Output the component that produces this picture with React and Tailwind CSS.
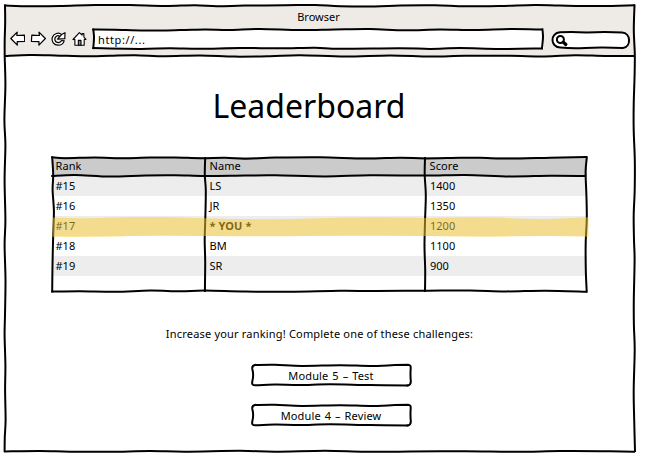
import React from "react";

// Smooth curve through a flat list of x,y pairs.
function curve(n) {
  const p = [];
  for (let i = 0; i < n.length; i += 2) p.push([n[i], n[i + 1]]);
  let d = `M${p[0][0]} ${p[0][1]}`;
  for (let i = 0; i < p.length - 1; i++) {
    const a = p[i - 1] || p[i];
    const b = p[i];
    const c = p[i + 1];
    const e = p[i + 2] || c;
    d += `C${b[0] + (c[0] - a[0]) / 6} ${b[1] + (c[1] - a[1]) / 6} ${c[0] - (e[0] - b[0]) / 6} ${c[1] - (e[1] - b[1]) / 6} ${c[0]} ${c[1]}`;
  }
  return d;
}

// Hand-drawn outline laid over a box; lines share the page's coordinates.
function Sketch({ box, lines = [], paths = [], width = 2 }) {
  return (
    <svg
      className="pointer-events-none absolute inset-0 h-full w-full overflow-visible"
      viewBox={box}
      fill="none"
      stroke="#000"
      strokeWidth={width}
      strokeLinecap="square"
    >
      {lines.map((l, i) => (
        <path key={i} d={curve(l)} />
      ))}
      {paths.map((d, i) => (
        <path key={i} d={d} strokeLinejoin="round" />
      ))}
    </svg>
  );
}

const windowLines = [
  [5, 5.5, 30, 6.2, 60, 6, 95, 5, 130, 5.1, 165, 6, 195, 5.2, 217, 6.2, 245, 5.6, 285, 5.3, 315, 5, 340, 6.2, 375, 6.4, 400, 5.4, 435, 5.2, 465, 6.3, 500, 6, 535, 5.1, 560, 5.6, 600, 6, 634, 5.2],
  [5, 5.5, 5.2, 22, 4.7, 40, 4.7, 56, 5.4, 85, 4.4, 120, 5.4, 145, 4.6, 180, 5.4, 220, 4.6, 245, 5.5, 280, 5, 315, 4.6, 335, 5.4, 365, 5.1, 390, 5.6, 420, 4.8, 437, 4.6, 451],
  [634.5, 5.5, 633.8, 30, 634.8, 54, 634.6, 75, 633.7, 105, 633.7, 130, 634.8, 160, 634.7, 190, 633.7, 215, 634, 240, 634.6, 260, 633.8, 300, 633.9, 325, 634.7, 350, 633.7, 390, 634.2, 420, 635, 451],
  [5, 451.5, 40, 450.9, 70, 451.7, 110, 451.8, 150, 451, 185, 451.7, 240, 450.8, 275, 451.7, 325, 450.7, 365, 451.7, 410, 451.6, 465, 451.2, 515, 451.8, 560, 451.1, 600, 451.2, 634, 451.8],
];
const toolbarLine = [5, 56, 30, 55, 55, 55.4, 85, 56.3, 110, 55.7, 135, 55.2, 165, 56.2, 200, 55.4, 235, 56.6, 270, 56.2, 300, 55.2, 345, 56.6, 390, 55.4, 430, 56.5, 465, 55.8, 510, 55.8, 545, 56.4, 575, 55.2, 605, 56, 634, 56];

const urlLines = [
  [93.3, 30, 115, 30.2, 145, 31, 180, 30.6, 205, 30, 230, 30.4, 260, 29.4, 300, 30.6, 335, 30, 370, 29.6, 405, 30.8, 440, 30, 475, 30.6, 510, 29.6, 542, 30],
  [93.3, 30, 94, 38, 93.3, 48.6],
  [542.5, 30, 543, 38, 542, 48.6],
  [93.3, 48.6, 140, 49.4, 170, 48.8, 200, 49.3, 240, 48.5, 280, 48.8, 315, 48.2, 340, 49.2, 400, 48.7, 430, 49.4, 460, 48.6, 500, 49.4, 542, 49],
];

const tableLines = [
  [52, 157.3, 65, 158.2, 95, 157.4, 115, 158.3, 150, 157.6, 175, 157.4, 200, 158.2, 225, 157.8, 245, 158.7, 275, 157.6, 320, 157.2, 365, 158.6, 400, 157.7, 425, 158.4, 460, 157.8, 480, 157.8, 510, 158.6, 550, 157.7, 586, 157],
  [52, 176, 75, 175, 110, 176.6, 145, 175.4, 175, 175.2, 205, 176, 245, 175.5, 275, 175.3, 325, 176.4, 370, 175.3, 425, 175.6, 465, 175, 510, 176.4, 550, 175.8, 585, 176],
  [52, 291.6, 80, 291.3, 115, 291.8, 150, 290.6, 180, 291.2, 205, 290.6, 245, 291.6, 290, 291.8, 340, 290.8, 375, 291, 425, 290.7, 470, 290.4, 505, 291.4, 545, 290.7, 586, 291.7],
  [52, 157.5, 53, 175, 52.4, 190, 53.7, 211, 53, 235, 52.3, 265, 52, 291.5],
  [205, 158, 204.6, 175, 205.6, 190, 205.2, 215, 204.5, 240, 205, 262, 204.7, 291],
  [424.8, 158, 424.5, 175, 425.6, 195, 424.8, 222, 424.3, 247, 425, 270, 424.8, 291],
  [586.6, 157.5, 585.4, 172, 586.2, 195, 586.6, 218, 585.5, 243, 585.6, 270, 586.5, 291.5],
];

const rows = [
  ["#15", "LS", "1400"],
  ["#16", "JR", "1350"],
  ["#17", "* YOU *", "1200"],
  ["#18", "BM", "1100"],
  ["#19", "SR", "900"],
];

function Arrow({ flip }) {
  return (
    <svg
      className={flip ? "h-4 w-4 -scale-x-100" : "h-4 w-4"}
      viewBox={flip ? "0.4 0 16 16" : "-0.8 0 16 16"}
      fill="#fff"
      stroke="#000"
      strokeWidth="1.2"
      strokeLinejoin="round"
    >
      <path d="M1 7.5 7.4 1.1 7 4.5 14.6 4.2 15 10.5 7.4 10.6 7.5 14.2Z" />
    </svg>
  );
}

function Reload() {
  return (
    <svg className="h-4 w-4" viewBox="0.3 0 16 16" fill="#fff" stroke="#000" strokeWidth="1.2" strokeLinejoin="round">
      <path d="M10.9 3.6C8.2 1 3 2.3 1.7 6.2.4 10.4 3.4 14.3 7.4 14.2c3 0 5.3-1.8 6.1-4.3l-2.6-.4c-.9 1.7-2.7 2.5-4.4 1.9C4.2 10.7 3.5 8 4.8 6.2 6 4.6 7.9 4.5 9.2 5.4L6.9 8.1l7.2-.4.2-6Z" />
      <path d="M10.9 3.6 9.2 5.4" />
    </svg>
  );
}

function Home() {
  return (
    <svg className="h-4 w-4" viewBox="0 0 16 16" fill="#fff" stroke="#000" strokeWidth="1.1" strokeLinejoin="round">
      <path d="M1 8.5 7.4 1.7l2.7 2.5V2.6h1.8v3.5l2.1 2.3-1.8.1v5.7H2.9V8.6Z" />
      <path d="M6.3 14.2V9.4h2.7v4.8Z" fill="#888" />
    </svg>
  );
}

function SketchButton({ box, y, children }) {
  const outline =
    curve([255, y + 1, 275, y + 0.8, 302, y + 1.9, 340, y + 1.2, 370, y + 1.9, 395, y + 1.1, 408, y + 0.8]) +
    `Q411 ${y + 1} 410.7 ${y + 4}` +
    `Q410.2 ${y + 11} 410.8 ${y + 17}Q411 ${y + 21} 407.5 ${y + 21.4}`;
  const rest =
    curve([407.5, y + 21.4, 370, y + 21.1, 330, y + 20.2, 300, y + 21, 275, y + 20.6, 254.5, y + 21.3]) +
    `Q251.5 ${y + 21} 252.3 ${y + 17.5}Q254 ${y + 11} 252.3 ${y + 5}Q251.8 ${y + 1.5} 255 ${y + 1}`;
  return (
    <button className="relative h-[22px] w-[160px] pr-[2px] text-center leading-[21px] tracking-[0.15px]">
      <Sketch box={box} paths={[outline, rest]} />
      <span className="relative [word-spacing:0.9px]">{children}</span>
    </button>
  );
}

export default function App() {
  return (
    <div className="h-[461px] w-[646px] overflow-hidden bg-white pl-1 pt-[5px] font-['Noto_Sans',sans-serif] text-[11px] leading-5 text-black">
      <div className="relative flex h-[447px] w-[631px] flex-col">
        <header className="flex h-[51px] shrink-0 flex-col bg-[#eeebe6]">
          <div className="mt-0.5 pr-0.5 text-center">Browser</div>
          <div className="flex h-5 items-center pl-[5px]">
            <nav className="mt-[3px] flex w-[84px] gap-[5px]">
              <Arrow />
              <Arrow flip />
              <Reload />
              <Home />
            </nav>
            <div className="relative mt-1 h-5 w-[451px] shrink-0 bg-white pl-[5px] leading-[21px] tracking-[0.6px]">
              <Sketch box="93 29.5 451 20" lines={urlLines} />
              http://...
            </div>
            <div className="relative ml-[8px] mt-[6px] h-[17px] w-[78px] rounded-[8px] bg-white">
              <Sketch
                box="552 32 78 17"
                width={2}
                paths={[
                  "M560 32.3Q572 31.4 587 32.5Q605 31.6 622 32.5C631 32.8 631.5 46.8 623 48Q600 47.2 585 48Q572 48.7 560 47.5C550 47 550 33 560 32.3Z",
                ]}
              />
              <svg className="relative ml-[4px] mt-[3px] h-3 w-3" viewBox="0 0 12 12" fill="none" stroke="#000">
                <circle cx="4.4" cy="4.5" r="3.5" strokeWidth="2" />
                <path d="m7.3 7.1 2.5 2.4" strokeWidth="3.2" strokeLinecap="round" />
              </svg>
            </div>
          </div>
        </header>
        <Sketch box="4 5 631 447" lines={[...windowLines, toolbarLine]} />
        <main className="flex flex-col items-center">
          <h1 className="mt-[28px] h-[44px] whitespace-nowrap pr-[21px] text-[32px] leading-[44px]">Leaderboard</h1>
          <div className="relative mt-[29px] h-[134px] w-[534px]">
            <div className="grid h-[19px] grid-cols-[154px_220px_160px] bg-[#cbcbcb] leading-[18px] tracking-[0.1px]">
              <span className="pl-[3px]">Rank</span>
              <span className="pl-[3px]">Name</span>
              <span className="pl-[3px]">Score</span>
            </div>
            {rows.map(([rank, name, score], i) => (
              <div key={rank} className={`grid h-5 grid-cols-[154px_220px_160px] leading-5 ${i % 2 === 0 ? "bg-[#ededed]" : "bg-white"}`}>
                <span className="pl-[3px]">{rank}</span>
                <span className={`pl-[3px] ${i === 2 ? "font-bold tracking-[0.1px]" : ""}`}>{name}</span>
                <span className="pl-[3.5px]">{score}</span>
              </div>
            ))}
            <Sketch box="52.8 157 534 134" lines={tableLines} />
            <svg className="absolute inset-0 h-full w-full overflow-visible" viewBox="52.5 157 534 134">
              <path
                d="M52 217.5Q85 218.8 115 217.5T205 218.2T320 218.2T425 218Q480 216.5 510 218.3T588 217.2V236.7Q555 235.5 515 236.3T425 236T320 235.8T205 236Q160 234.8 130 236T52 236.8Z"
                fill="#fbcb31"
                fillOpacity=".5"
              />
            </svg>
          </div>
          <p className="mt-[33px] h-5 whitespace-nowrap tracking-[0.19px]">Increase your ranking! Complete one of these challenges:</p>
          <div className="mt-5 flex flex-col gap-[18px] pl-[25px]">
            <SketchButton box="252 364.5 160 22" y={364.5}>Module 5 – Test</SketchButton>
            <SketchButton box="252 404.5 160 22" y={404.5}>Module 4 – Review</SketchButton>
          </div>
        </main>
      </div>
    </div>
  );
}
